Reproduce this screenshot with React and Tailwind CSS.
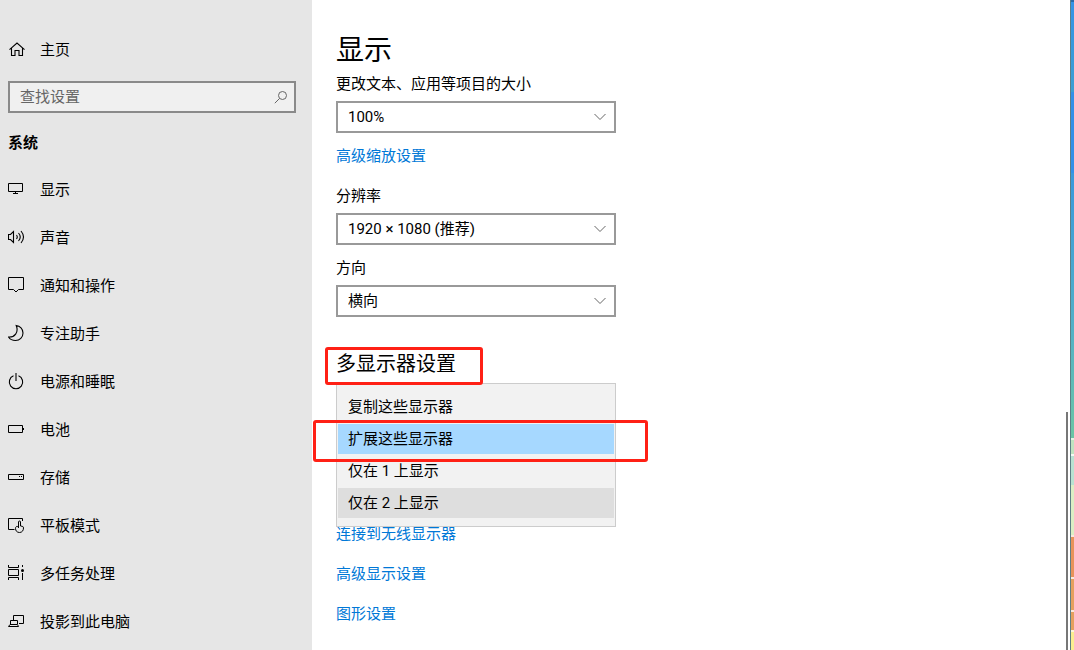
import React, { useState } from 'react';
import clsx from 'clsx';

const Icon = ({ children }) => (
  <svg
    viewBox="0 0 18 18"
    className="h-[18px] w-[18px] shrink-0"
    fill="none"
    stroke="currentColor"
    strokeWidth="1"
    aria-hidden="true"
  >
    {children}
  </svg>
);

const HomeIcon = () => (
  <Icon>
    <path strokeWidth="1.1" d="M1.5 9.7 9 3l7.500 6.700M3.500 8v7.500H7v-5h4v5h3.500V8" />
  </Icon>
);

const NAV_ITEMS = [
  {
    label: '显示',
    active: true,
    icon: <path d="M.5 3.5h14v8H.5zM7.5 11.5v2M5 13.5h5" />,
  },
  {
    label: '声音',
    icon: (
      <path
        strokeWidth="1.1"
        d="M.5 6.5h2l3-3v11l-3-3h-2zM8.5 7q1.5 2 0 4M10.5 5q3.5 4 0 8M13 3q5 6 0 12"
      />
    ),
  },
  {
    label: '通知和操作',
    icon: <path d="M.5 1.5h15v12h-5L8 16l-2.5-2.5h-5z" />,
  },
  {
    label: '专注助手',
    icon: (
      <path
        strokeWidth="1.1"
        d="M8.2 1.5C12 2 15 5 15 9c0 4.5-3.3 7.5-7.5 7.5-3 0-5.5-1.2-7-3.5C6.5 13.5 11 8.5 8.2 1.5z"
      />
    ),
  },
  {
    label: '电源和睡眠',
    icon: <path strokeWidth="1.1" d="M5.5 3.8a6.7 6.7 0 1 0 5 0M8 1v8" />,
  },
  {
    label: '电池',
    icon: <path d="M.5 5.5h14v7H.5zM15.5 8v2" />,
  },
  {
    label: '存储',
    icon: <path d="M.5 6.5h15v5H.5zM11 8.5h1M13 8.5h1" />,
  },
  {
    label: '平板模式',
    icon: (
      <path d="M14.5 5V2.5H.5v11h6M10.5 12V6a1 1 0 0 1 2 0v4l1.7.3c.9.2 1.3.7 1.3 1.6 0 2.6-1.4 4.6-4 4.6s-4-1.8-4-4.2c0-1 .6-1.9 1.500-1.900.8 0 1.500.6 1.500 1.600" />
    ),
  },
  {
    label: '多任务处理',
    icon: (
      <>
        <path d="M.5 1v2.5h10V1M.5 5.5h10v6H.5zM.5 16v-2.5h10V16M14.5 1v2M14.5 9v7" />
        <circle cx="14.5" cy="6.5" r="1.5" fill="currentColor" stroke="none" />
      </>
    ),
  },
  {
    label: '投影到此电脑',
    icon: <path d="M5.5 8V3.5h10v8H11M2.5 12V8.5h7V12M2 12.5h7.5l1 2H.5z" />,
  },
];

const DISPLAY_MODES = ['复制这些显示器', '扩展这些显示器', '仅在 1 上显示', '仅在 2 上显示'];

const SelectField = ({ id, label, options }) => (
  <div className="w-[280px] max-w-full">
    <label htmlFor={id} className="block">
      {label}
    </label>
    <div className="relative mt-[5px]">
      <select
        id={id}
        className="block h-8 w-full appearance-none border-2 border-[#999999] bg-white pr-8 pl-[10px] focus:outline-none"
      >
        {options.map((option) => (
          <option key={option}>{option}</option>
        ))}
      </select>
      <svg
        viewBox="0 0 12 8"
        className="pointer-events-none absolute top-3 right-[10px] h-2 w-3"
        fill="none"
        stroke="#666666"
        aria-hidden="true"
      >
        <path d="M.5 1 6 6.5 11.5 1" />
      </svg>
    </div>
  </div>
);

const SettingsLink = ({ children }) => (
  <a href="#" className="block w-fit text-[#0078d7] hover:text-[#666666]">
    {children}
  </a>
);

const Sidebar = () => (
  <aside className="w-[312px] shrink-0 bg-[#e6e6e6] pt-[25px] pr-4">
    <a href="#" className="flex h-12 items-center gap-[14px] pl-2">
      <HomeIcon />
      <span className="pt-[2px]">主页</span>
    </a>
    <div className="relative mt-2 ml-2">
      <input
        type="text"
        aria-label="查找设置"
        placeholder="查找设置"
        className="block h-8 w-full border-2 border-[#8a8a8a] bg-[#f0f0f0] pr-8 pl-[10px] placeholder:text-[#666666] focus:outline-none"
      />
      <svg
        viewBox="0 0 14 14"
        className="pointer-events-none absolute top-[9px] right-2 h-[14px] w-[14px]"
        fill="none"
        stroke="#666666"
        aria-hidden="true"
      >
        <circle cx="8.5" cy="5.5" r="4" />
        <path d="M5.5 8.5.8 13.2" />
      </svg>
    </div>
    <h2 className="mt-[18px] pl-2 font-bold">系统</h2>
    <nav className="mt-[10px]">
      <ul>
        {NAV_ITEMS.map((item) => (
          <li key={item.label}>
            <a
              href="#"
              aria-current={item.active ? 'page' : undefined}
              className="flex h-12 items-center gap-[14px] pl-2"
            >
              <Icon>{item.icon}</Icon>
              <span className="pt-[2px]">{item.label}</span>
            </a>
          </li>
        ))}
      </ul>
    </nav>
  </aside>
);

const DisplayModeMenu = () => {
  const [selected, setSelected] = useState(1);

  return (
    <ul
      role="listbox"
      aria-label="多显示器设置"
      className="absolute top-0 left-0 z-10 w-[280px] border border-[#cccccc] bg-[#f2f2f2] py-[7px]"
    >
      {DISPLAY_MODES.map((mode, index) => (
        <li key={mode} role="option" aria-selected={index === selected} className="relative">
          <button
            type="button"
            onClick={() => setSelected(index)}
            className={clsx(
              'block h-8 w-full border border-transparent bg-clip-padding pl-[10px] text-left',
              index === selected && 'bg-[#a6d8ff]',
              index === 3 && index !== selected && 'bg-[#dedede]'
            )}
          >
            {mode}
          </button>
          {index === 1 && (
            <span className="pointer-events-none absolute -top-[3px] -left-6 h-[42px] w-[335px] rounded-[3px] border-3 border-[#ff2015]" />
          )}
        </li>
      ))}
    </ul>
  );
};

// Slice of desktop that shows past the window's right edge
const DesktopEdge = () => (
  <div className="flex w-1 shrink-0 flex-col border-l border-[#5f7f86]">
    <div className="h-[2px] bg-[#2a6aa8]" />
    <div className="grow-[90] bg-linear-to-b from-[#3593e6] to-[#3c9fd2]" />
    <div className="grow-[80] bg-[#3390e8]" />
    <div className="grow-[150] bg-linear-to-b from-[#3a99dc] to-[#52b0c8]" />
    <div className="grow-[115] bg-linear-to-b from-[#52b0c8] to-[#6cc5a4]" />
    <div className="h-[2px] bg-[#e4f4e4]" />
    <div className="grow-[14] bg-[#c0e3c0]" />
    <div className="h-[2px] bg-[#f4faf4]" />
    <div className="grow-[28] bg-[#b8e2d2]" />
    <div className="grow-[50] bg-[#dceec4]" />
    <div className="h-[2px] bg-[#fbe9dd]" />
    <div className="grow-[40] bg-[#e8935a]" />
    <div className="h-[2px] bg-[#fbe9dd]" />
    <div className="grow-[31] bg-[#e5a05f]" />
    <div className="h-[2px] bg-[#fbe9dd]" />
    <div className="grow-[18] bg-[#e5a05f]" />
    <div className="h-[2px] bg-[#fdf6dc]" />
    <div className="grow-[18] bg-[#fbee90]" />
  </div>
);

const App = () => {
  return (
    <div className="flex min-h-screen bg-white font-[Roboto,'Noto_Sans_CJK_SC',sans-serif] text-[15px] leading-6 text-black">
      <Sidebar />
      <main className="min-w-0 flex-1 pt-[33px] pl-6">
        <h1 className="text-[28px] leading-9">显示</h1>
        <div className="mt-[3px]">
          <SelectField
            id="scale"
            label="更改文本、应用等项目的大小"
            options={['100%', '125%', '150%', '175%']}
          />
        </div>
        <div className="mt-[11px]">
          <SettingsLink>高级缩放设置</SettingsLink>
        </div>
        <div className="mt-4">
          <SelectField
            id="resolution"
            label="分辨率"
            options={['1920 × 1080 (推荐)', '1680 × 1050', '1280 × 720']}
          />
        </div>
        <div className="mt-[11px]">
          <SelectField id="orientation" label="方向" options={['横向', '纵向']} />
        </div>
        <div className="relative z-20 mt-[33px] w-fit">
          <h2 className="text-[20px] leading-7">多显示器设置</h2>
          <span className="pointer-events-none absolute -top-[3px] -left-[11px] h-[38px] w-[158px] rounded-[3px] border-3 border-[#ff2015]" />
        </div>
        <div className="relative mt-[5px] h-[139px]">
          <DisplayModeMenu />
        </div>
        <div className="flex flex-col gap-4">
          <SettingsLink>连接到无线显示器</SettingsLink>
          <SettingsLink>高级显示设置</SettingsLink>
          <SettingsLink>图形设置</SettingsLink>
        </div>
      </main>
      <div className="mr-[2px] flex w-[2px] shrink-0 flex-col">
        <div className="grow-[412]" />
        <div className="grow-[238] bg-[#777777]" />
      </div>
      <DesktopEdge />
    </div>
  );
};

export default App;
